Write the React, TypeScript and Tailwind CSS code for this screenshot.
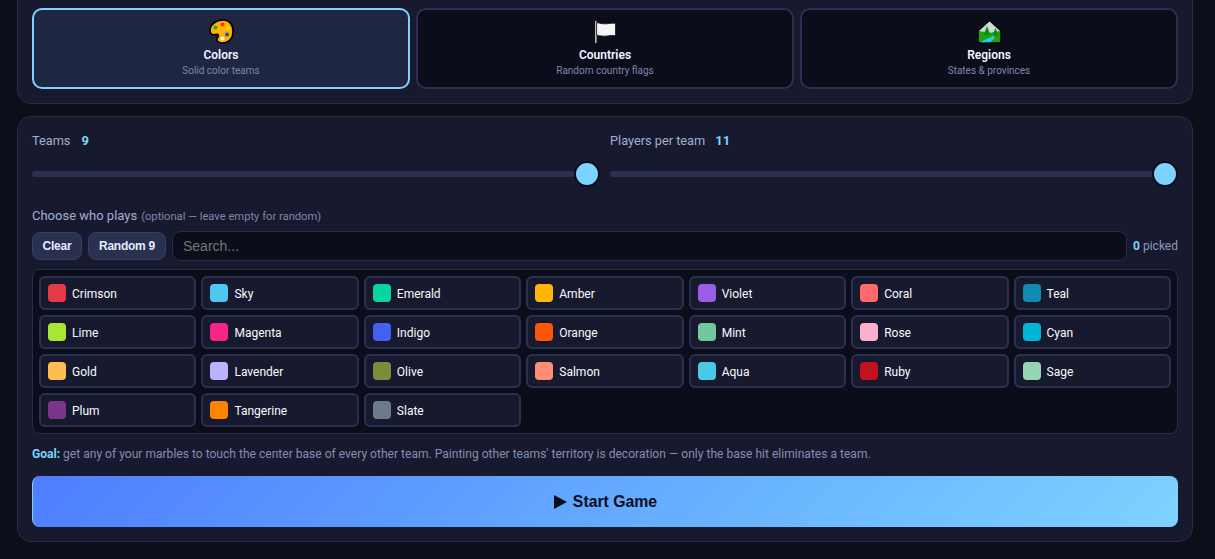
const teams = [
  { name: "Crimson", color: "#e63946" },
  { name: "Sky", color: "#4cc9f0" },
  { name: "Emerald", color: "#06d6a0" },
  { name: "Amber", color: "#ffb703" },
  { name: "Violet", color: "#9b5de5" },
  { name: "Coral", color: "#ff6b6b" },
  { name: "Teal", color: "#118ab2" },
  { name: "Lime", color: "#a7e635" },
  { name: "Magenta", color: "#f72585" },
  { name: "Indigo", color: "#4361ee" },
  { name: "Orange", color: "#fb5607" },
  { name: "Mint", color: "#74c69d" },
  { name: "Rose", color: "#ffafcc" },
  { name: "Cyan", color: "#00b4d8" },
  { name: "Gold", color: "#ffbe4f" },
  { name: "Lavender", color: "#bdb2ff" },
  { name: "Olive", color: "#7d8b3a" },
  { name: "Salmon", color: "#ff8c75" },
  { name: "Aqua", color: "#48cae4" },
  { name: "Ruby", color: "#c1121f" },
  { name: "Sage", color: "#95d5b2" },
  { name: "Plum", color: "#7b368c" },
  { name: "Tangerine", color: "#fb8500" },
  { name: "Slate", color: "#6c7a89" },
];

const PaletteIcon = () => (
  <svg width="25" height="25" viewBox="0 0 25 25">
    <path
      d="M14 1C7 1 .9 5.500.9 11.500c0 3.500 2.600 4.800 5.100 4 2.300-.7 3.700.2 3.300 1.800-.3 1.100-1.500 1.500-1.500 3 0 2.200 2.700 3.700 6 3.700 6.500 0 10.300-5.300 10.300-11.500C24.100 6 20.500 1 14 1z"
      fill="#ffb300"
      stroke="#000"
      strokeWidth="1.700"
    />
    <circle cx="13.500" cy="5.500" r="2" fill="#f4311c" />
    <circle cx="6.500" cy="8.500" r="2" fill="#2fa815" />
    <circle cx="18.500" cy="9" r="2" fill="#ffd21f" />
    <circle cx="18" cy="15.500" r="2" fill="#1450e0" />
    <circle cx="13.500" cy="19.500" r="2" fill="#ffffff" />
  </svg>
);

const FlagIcon = () => (
  <svg width="25" height="25" viewBox="0 0 25 25">
    <rect x="2" y="2" width="1.600" height="22" fill="#b9b9b9" />
    <path d="M3.600 3.500c4 1.300 8 1.500 11 1.200 2.500-.4 5-.7 7.900-.3v12.300c-3-.4-5.500-.2-8 .2-3.500.5-7.700.3-10.900-.9z" fill="#f4f4f4" stroke="#111" strokeWidth="0.800" />
  </svg>
);

const RegionIcon = () => (
  <svg width="25" height="25" viewBox="0 0 25 25">
    <path d="M12.500 1.500 24 12V24H1V12z" fill="#12a812" stroke="#000" strokeWidth="1.500" />
    <path d="M12.500 2.500 23 12 12.500 14 2 12z" fill="#d6d6d6" />
    <path d="M10 7 13.500 16H6.500zM18.500 9l3.500 8.500h-7z" fill="#0a8f14" />
    <path d="M15.500 15.500c1 1.500-1 2.500-3 3.300-2 .9-5 1.600-9 4.400h10c1-2 3-2.500 4-3.700.7-1.300-.5-2.700-2-4z" fill="#2cc6ee" />
    <rect x="19" y="17" width="1.500" height="4" fill="#c8501e" />
    <rect x="4.500" y="15" width="1.500" height="3" fill="#c8501e" />
  </svg>
);

const modes = [
  { title: "Colors", sub: "Solid color teams", icon: <PaletteIcon />, active: true },
  { title: "Countries", sub: "Random country flags", icon: <FlagIcon />, active: false },
  { title: "Regions", sub: "States & provinces", icon: <RegionIcon />, active: false },
];

const Slider = ({ label, value, gap }: { label: string; value: number; gap: string }) => (
  <div className="flex-1">
    <div className="flex items-center h-[18px] pt-[1px] text-[12.750px] text-[#9fb0cf]">
      <span>{label}</span>
      <span className={gap + " text-[13px] font-bold text-[#7dd3ff]"}>{value}</span>
    </div>
    <div className="relative mt-[22px] h-[6px] rounded-full bg-[#2a3050]">
      <div className="absolute right-0 top-[-10px] w-[26px] h-[26px] rounded-full bg-[#7dd3ff] border-[2px] border-[#0b0e1a]" />
    </div>
  </div>
);

export default function App() {
  return (
    <div className="h-[559px] overflow-hidden bg-[#0c0e1a] pl-[17px] pr-[22px] text-white font-['Roboto',sans-serif]">
      <section className="mt-[-40px] h-[144px] rounded-[14px] border border-[#272c48] bg-[#171a2e] px-[14px] pt-[47px]">
        <div className="grid grid-cols-3 gap-[6px]">
          {modes.map((m) => (
            <div
              key={m.title}
              className={
                m.active
                  ? "h-[81px] rounded-[10px] border-[2px] border-[#7dd3ff] bg-[#1e2642] flex flex-col items-center pt-[9px]"
                  : "h-[81px] rounded-[10px] border-[2px] border-[#2a3050] bg-[#0b0e1a] flex flex-col items-center pt-[9px]"
              }
            >
              {m.icon}
              <div className="mt-[3px] text-[12px] leading-[17px] font-semibold text-[#f1f5ff]">{m.title}</div>
              <div className="text-[10px] leading-[14px] text-[#7a88aa]">{m.sub}</div>
            </div>
          ))}
        </div>
      </section>

      <section className="mt-[12px] h-[426px] rounded-[14px] border border-[#272c48] bg-[#171a2e] px-[14px] pt-[14px]">
        <div className="flex gap-[10px]">
          <Slider label="Teams" value={9} gap="ml-[11px]" />
          <Slider label="Players per team" value={11} gap="ml-[10px]" />
        </div>

        <div className="mt-[30px] h-[18px] flex items-baseline text-[13px] leading-[18px] text-[#9fb0cf]">
          Choose who plays
          <span className="ml-[4px] text-[11.200px] text-[#7a88aa]">(optional — leave empty for random)</span>
        </div>

        <div className="mt-[6px] flex items-center gap-[6px]">
          <button className="h-[28px] w-[50px] rounded-[8px] border border-[#363d60] bg-[#2a3050] text-[12px] tracking-[-0.25px] font-bold font-['Liberation_Sans',sans-serif] text-[#e6ecff]">
            Clear
          </button>
          <button className="h-[28px] w-[78px] rounded-[8px] border border-[#363d60] bg-[#2a3050] text-[12px] tracking-[-0.25px] font-bold font-['Liberation_Sans',sans-serif] text-[#e6ecff]">
            Random 9
          </button>
          <input
            placeholder="Search..."
            className="flex-1 h-[30px] px-[10px] rounded-[8px] border border-[#272c48] bg-[#0b0e1a] text-[14px] font-['Liberation_Sans',sans-serif] placeholder:text-[#757575] outline-none"
          />
          <div className="text-[12px] text-[#8d9bbb]">
            <span className="font-bold text-[#7dd3ff]">0</span> picked
          </div>
        </div>

        <div className="mt-[8px] h-[165px] rounded-[8px] border border-[#272c48] bg-[#0b0e1a] p-[6px] grid grid-cols-7 gap-x-[5px] gap-y-[5px] content-start">
          {teams.map((t) => (
            <div
              key={t.name}
              className="h-[34px] rounded-[6px] border-[2px] border-[#2a3050] bg-[#171a2e] flex items-center pl-[7px] gap-[6px]"
            >
              <span className="w-[18px] h-[18px] rounded-[4px]" style={{ backgroundColor: t.color }} />
              <span className="pt-[2px] text-[12px] text-[#f8faff]">{t.name}</span>
            </div>
          ))}
        </div>

        <p className="mt-[11px] h-[18px] text-[12.070px] leading-[18px] text-[#7f8fb3]">
          <b className="text-[#7dd3ff]">Goal:</b> get any of your marbles to touch the center base of every other team. Painting other teams' territory is decoration — only the base hit eliminates a team.
        </p>

        <button className="mt-[13px] w-full h-[51px] rounded-[8px] bg-linear-135 from-[#4f7dff] to-[#7dd3ff] border-l border-[#7dd3ff] flex items-center justify-center gap-[6px] text-[15.800px] font-bold text-[#0b0e1a] font-['Liberation_Sans',sans-serif]">
          <svg width="13" height="14" viewBox="0 0 13 14">
            <path d="M0 0 13 7 0 14z" fill="#0b0e1a" />
          </svg>
          Start Game
        </button>
      </section>
    </div>
  );
}
